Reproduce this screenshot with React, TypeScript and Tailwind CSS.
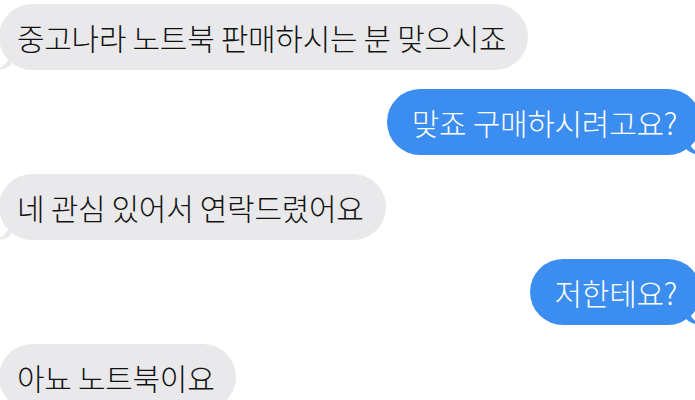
const messages = [
  { text: "중고나라 노트북 판매하시는 분 맞으시죠", mine: false },
  { text: "맞죠 구매하시려고요?", mine: true },
  { text: "네 관심 있어서 연락드렸어요", mine: false },
  { text: "저한테요?", mine: true },
  { text: "아뇨 노트북이요", mine: false },
];

function Tail({ mine }: { mine: boolean }) {
  if (mine) {
    return (
      <svg
        className="absolute bottom-0 right-[-2px]"
        width="16"
        height="20"
        viewBox="0 0 16 20"
      >
        <path d="M0 0 C2 10 6 17 16 20 C9 20 4 18 0 15 Z" fill="#3b8def" />
      </svg>
    );
  }
  return (
    <svg
      className="absolute bottom-0 left-[-4px]"
      width="16"
      height="20"
      viewBox="0 0 16 20"
    >
      <path d="M16 0 C14 10 10 17 0 20 C7 20 12 18 16 15 Z" fill="#e9e9eb" />
    </svg>
  );
}

function Bubble({ text, mine }: { text: string; mine: boolean }) {
  return (
    <div className={mine ? "flex justify-end" : "flex justify-start"}>
      <div
        className={
          mine
            ? "relative flex h-[66px] items-center rounded-[33px] bg-[#3b8def] pl-[25px] pr-[24px] text-white -mr-[6px]"
            : "relative flex h-[66px] items-center rounded-[33px] bg-[#e9e9eb] pl-[18px] pr-[22px] text-[#111] -ml-[1px]"
        }
      >
        <Tail mine={mine} />
        <span className="relative whitespace-nowrap text-[30px] font-light leading-none tracking-[-0.3px]">
          {text}
        </span>
      </div>
    </div>
  );
}

export default function App() {
  return (
    <div
      className="flex h-[400px] w-[695px] flex-col gap-[19px] overflow-hidden bg-white pt-[4px]"
      style={{ fontFamily: '"Noto Sans CJK KR", "Noto Sans", sans-serif' }}
    >
      {messages.map((m, i) => (
        <Bubble key={i} text={m.text} mine={m.mine} />
      ))}
    </div>
  );
}
